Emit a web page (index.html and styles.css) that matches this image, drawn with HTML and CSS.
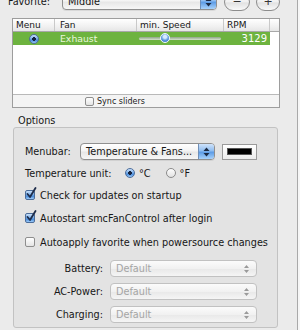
FILE: index.html
```html
<!DOCTYPE html>
<html>
<head>
<meta charset="utf-8">
<link rel="stylesheet" href="styles.css">
</head>
<body>
<div class="window">
  <div class="fav-row">
    <span class="fav-label">Favorite:</span>
    <div class="popup fav-popup">
      <span class="popup-text">Middle</span>
      <span class="popup-arrow blue"><svg width="7" height="10" viewBox="0 0 7 10"><path d="M3.5 0.5 L6.5 4 L0.5 4 Z M3.5 9.5 L6.5 6 L0.5 6 Z" fill="#1c2b45"/></svg></span>
    </div>
    <div class="round-btn minus">−</div>
    <div class="round-btn plus">+</div>
  </div>

  <div class="table">
    <div class="thead">
      <div class="th col-menu">Menu</div>
      <div class="th col-fan">Fan</div>
      <div class="th col-speed">min. Speed</div>
      <div class="th col-rpm">RPM</div>
      <div class="th col-corner"></div>
    </div>
    <div class="tbody">
      <div class="tr selected">
        <div class="td col-menu center"><span class="radio on"></span></div>
        <div class="td col-fan">Exhaust</div>
        <div class="td col-speed"><div class="slider"><span class="knob" style="left: 21px"></span></div></div>
        <div class="td col-rpm right">3129</div>
      </div>
    </div>
    <div class="tfoot">
      <span class="checkbox small"></span><span class="small-text">Sync sliders</span>
    </div>
  </div>

  <div class="options-title">Options</div>
  <div class="box">
    <div class="row r-menubar">
      <span class="lbl w-menubar">Menubar:</span>
      <div class="popup menubar-popup">
        <span class="popup-text">Temperature &amp; Fans...</span>
        <span class="popup-arrow blue"><svg width="7" height="10" viewBox="0 0 7 10"><path d="M3.5 0.5 L6.5 4 L0.5 4 Z M3.5 9.5 L6.5 6 L0.5 6 Z" fill="#1c2b45"/></svg></span>
      </div>
      <div class="color-well"><span class="swatch"></span></div>
    </div>
    <div class="row r-temp">
      <span class="lbl w-temp">Temperature unit:</span>
      <span class="radio on"></span><span class="opt">°C</span>
      <span class="radio"></span><span class="opt">°F</span>
    </div>
    <div class="row r-check1">
      <span class="checkbox checked"><svg width="12" height="13" viewBox="0 0 12 13"><path d="M2.5 7 L5 10 L10.5 1" fill="none" stroke="#1d2c4a" stroke-width="1.8" stroke-linecap="round" stroke-linejoin="round"/></svg></span>
      <span class="ctext">Check for updates on startup</span>
    </div>
    <div class="row r-check2">
      <span class="checkbox checked"><svg width="12" height="13" viewBox="0 0 12 13"><path d="M2.5 7 L5 10 L10.5 1" fill="none" stroke="#1d2c4a" stroke-width="1.8" stroke-linecap="round" stroke-linejoin="round"/></svg></span>
      <span class="ctext">Autostart smcFanControl after login</span>
    </div>
    <div class="row r-check3">
      <span class="checkbox"></span>
      <span class="ctext">Autoapply favorite when powersource changes</span>
    </div>
    <div class="row r-battery">
      <span class="lbl-right">Battery:</span>
      <div class="popup disabled"><span class="popup-text">Default</span><span class="popup-arrow gray"><svg width="7" height="10" viewBox="0 0 7 10"><path d="M3.5 1 L6 4 L1 4 Z M3.5 9 L6 6 L1 6 Z" fill="#9a9a9a"/></svg></span></div>
    </div>
    <div class="row r-ac">
      <span class="lbl-right">AC-Power:</span>
      <div class="popup disabled"><span class="popup-text">Default</span><span class="popup-arrow gray"><svg width="7" height="10" viewBox="0 0 7 10"><path d="M3.5 1 L6 4 L1 4 Z M3.5 9 L6 6 L1 6 Z" fill="#9a9a9a"/></svg></span></div>
    </div>
    <div class="row r-charging">
      <span class="lbl-right">Charging:</span>
      <div class="popup disabled"><span class="popup-text">Default</span><span class="popup-arrow gray"><svg width="7" height="10" viewBox="0 0 7 10"><path d="M3.5 1 L6 4 L1 4 Z M3.5 9 L6 6 L1 6 Z" fill="#9a9a9a"/></svg></span></div>
    </div>
  </div>
</div>
</body>
</html>
```

FILE: styles.css
```css
* { box-sizing: border-box; margin: 0; padding: 0; }
html, body { width: 300px; height: 330px; overflow: hidden; }
body {
  background: #f6f6f6;
  font-family: "DejaVu Sans", "Liberation Sans", sans-serif;
  font-size: 9.7px;
  color: #161616;
}
.window {
  width: 298px;
  height: 330px;
  background: #ebebeb;
  border-right: 1px solid #a9a9a9;
  overflow: hidden;
}

/* favorite row */
.fav-row {
  display: flex;
  align-items: center;
  height: 17px;
  margin-top: -7px;
  padding-left: 8px;
}
.fav-label { width: 54px; }
.popup {
  display: flex;
  align-items: center;
  height: 17px;
  border: 1px solid #8f8f8f;
  border-radius: 4px;
  background: linear-gradient(#ffffff, #f4f4f4 45%, #e7e7e7 55%, #f7f7f7);
  overflow: hidden;
  box-shadow: 0 1px 0 rgba(0,0,0,0.08);
}
.popup-text { flex: 1; padding-left: 5px; white-space: nowrap; overflow: hidden; }
.popup-arrow {
  width: 16px;
  height: 100%;
  display: flex;
  align-items: center;
  justify-content: center;
}
.popup-arrow.blue {
  background: linear-gradient(#cfe3fb, #8fbdf0 45%, #5d9ce6 55%, #a8d2fb);
  border-left: 1px solid #6f8fb8;
}
.popup-arrow.gray { background: transparent; }
.fav-popup { width: 155px; }
.round-btn {
  height: 18px;
  border: 1px solid #8c8c8c;
  border-radius: 9px;
  background: linear-gradient(#ffffff, #f0f0f0 50%, #e2e2e2 55%, #f8f8f8);
  display: flex;
  align-items: center;
  justify-content: center;
  font-size: 11px;
  color: #333;
}
.minus { width: 26px; margin-left: 7px; }
.plus { width: 24px; margin-left: 6px; }

/* table */
.table {
  margin: 8px 0 0 12px;
  width: 268px;
  border: 1px solid #9d9d9d;
  background: #ffffff;
}
.thead {
  display: flex;
  height: 13px;
  background: linear-gradient(#ffffff, #f1f1f1 60%, #e6e6e6);
  border-bottom: 1px solid #a8a8a8;
  font-size: 9px;
}
.th {
  display: flex;
  align-items: center;
  padding-left: 3px;
  border-right: 1px solid #c9c9c9;
  white-space: nowrap;
}
.col-menu { width: 42px; }
.col-fan { width: 82px; padding-left: 5px; }
.col-speed { width: 87px; }
.col-rpm { width: 46px; }
.col-corner { flex: 1; border-right: none; }
.tbody { height: 63px; border-bottom: 1px solid #b9b9b9; }
.tr { display: flex; height: 13px; }
.tr.selected { background: #6db33f; color: #eaf7dc; width: 257px; }
.td { display: flex; align-items: center; white-space: nowrap; font-size: 9.3px; }
.td.center { justify-content: center; }
.td.right { justify-content: flex-end; padding-right: 3px; font-size: 10px; color: #ffffff; }
.tr .col-menu { padding-left: 0; }
.slider {
  position: relative;
  width: 82px;
  height: 3px;
  margin-left: 2px;
  border-radius: 2px;
  background: linear-gradient(#8fa488, #d6e2cf);
}
.knob {
  position: absolute;
  top: -4px;
  width: 10px;
  height: 10px;
  border-radius: 50%;
  border: 1px solid #eef6ff;
  background: radial-gradient(circle at 50% 35%, #d7ebff 0 1.5px, #5d9be0 3.5px, #2f6cb8);
}
.tfoot {
  height: 12px;
  display: flex;
  align-items: center;
  padding-left: 72px;
  background: #f4f4f4;
}
.small-text { font-size: 8px; margin-left: 3px; color: #222; }

/* radio & checkbox */
.radio {
  display: inline-block;
  width: 10px;
  height: 10px;
  border-radius: 50%;
  border: 1px solid #8b8b8b;
  background: linear-gradient(#fdfdfd, #e2e2e2);
  flex: none;
}
.radio.on {
  border: 1px solid #4d6e9c;
  background: radial-gradient(circle, #15233f 0 1.6px, transparent 2.1px),
              linear-gradient(#c9e0fa, #6aa5e6 55%, #3c82d6 60%, #9ccaf8);
}
.checkbox {
  display: inline-block;
  width: 10px;
  height: 10px;
  border: 1px solid #8e8e8e;
  border-radius: 2px;
  background: linear-gradient(#ffffff, #e4e4e4);
  flex: none;
  position: relative;
}
.checkbox.small { width: 9px; height: 9px; }
.checkbox.checked {
  border-color: #4c6d9a;
  background: linear-gradient(#c9e0fa, #6aa5e6 55%, #3c82d6 60%, #9ccaf8);
}
.checkbox svg { position: absolute; left: -1px; top: -4px; }

/* options */
.options-title { margin: 7px 0 0 18px; height: 12px; line-height: 12px; }
.box {
  margin: 0 0 0 13px;
  width: 265px;
  height: 201px;
  border: 1px solid #c2c2c2;
  border-radius: 3px;
  background: #e3e3e3;
  padding: 15px 0 0 11px;
  display: flex;
  flex-direction: column;
}
.row { display: flex; align-items: center; white-space: nowrap; }
.lbl { flex: none; }
.w-menubar { width: 55px; }
.w-temp { width: 100px; }
.menubar-popup { width: 135px; }
.color-well {
  width: 35px;
  height: 16px;
  margin-left: 7px;
  border: 1px solid #9a9a9a;
  background: linear-gradient(#ffffff, #ececec);
  display: flex;
  align-items: center;
  justify-content: center;
}
.swatch { width: 25px; height: 7px; background: #000; border: 1px solid #555; }
.r-menubar { height: 17px; }
.r-temp { height: 12px; margin-top: 7px; }
.opt { margin: 0 15px 0 4px; }
.r-check1 { height: 12px; margin-top: 10px; }
.r-check2 { height: 12px; margin-top: 11px; }
.r-check3 { height: 12px; margin-top: 12px; }
.ctext { margin-left: 5px; }
.lbl-right { width: 78px; text-align: right; flex: none; }
.r-battery { margin-top: 12px; }
.r-ac, .r-charging { margin-top: 6px; }
.popup.disabled {
  width: 147px;
  height: 17px;
  margin-left: 7px;
  border-color: #c1c1c1;
  color: #a5a5a5;
  background: linear-gradient(#fbfbfb, #f1f1f1 50%, #e9e9e9 55%, #f5f5f5);
  box-shadow: none;
}
.popup.disabled .popup-arrow { width: 20px; }
```
